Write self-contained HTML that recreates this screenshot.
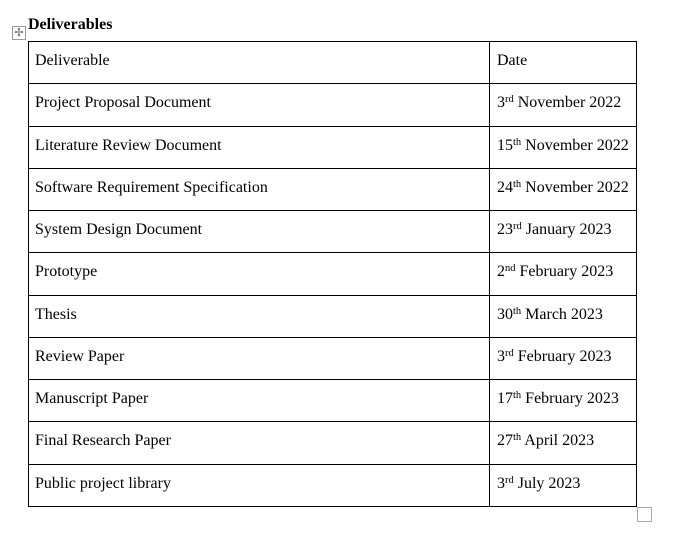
<!DOCTYPE html>
<html><head><style>
body{margin:0;width:688px;height:536px;background:#fff;font-family:"Liberation Serif",serif;font-size:16px;color:#000;position:relative;overflow:hidden}
.t{position:absolute;left:28px;top:16px;font-weight:bold;line-height:18px}
.mv{position:absolute;left:12px;top:26px;width:12px;height:12px;border:1px solid #999;font-size:11px;line-height:12px;text-align:center;color:#555}
.hl{position:absolute;left:28px;width:609px;height:1px;background:#000}
.vl{position:absolute;top:41px;height:466px;width:1px;background:#000}
.c{position:absolute;line-height:18px;margin-top:1px}
sup{font-size:10.5px;vertical-align:5px;line-height:0}
.sq{position:absolute;left:637px;top:507px;width:13px;height:13px;border:1px solid #aaa}
</style></head><body>
<div class="t">Deliverables</div>
<div class="mv">✢</div>
<div class="hl" style="top:41px"></div><div class="hl" style="top:83px"></div><div class="hl" style="top:126px"></div><div class="hl" style="top:168px"></div><div class="hl" style="top:210px"></div><div class="hl" style="top:252px"></div><div class="hl" style="top:295px"></div><div class="hl" style="top:337px"></div><div class="hl" style="top:379px"></div><div class="hl" style="top:421px"></div><div class="hl" style="top:464px"></div><div class="hl" style="top:506px"></div>
<div class="vl" style="left:28px"></div><div class="vl" style="left:489px"></div><div class="vl" style="left:636px"></div>
<div class="c" style="left:35px;top:51px">Deliverable</div><div class="c" style="left:497px;top:51px">Date</div>
<div class="c" style="left:35px;top:93px">Project Proposal Document</div><div class="c" style="left:497px;top:93px">3<sup>rd</sup> November 2022</div>
<div class="c" style="left:35px;top:136px">Literature Review Document</div><div class="c" style="left:497px;top:136px">15<sup>th</sup> November 2022</div>
<div class="c" style="left:35px;top:178px">Software Requirement Specification</div><div class="c" style="left:497px;top:178px">24<sup>th</sup> November 2022</div>
<div class="c" style="left:35px;top:220px">System Design Document</div><div class="c" style="left:497px;top:220px">23<sup>rd</sup> January 2023</div>
<div class="c" style="left:35px;top:262px">Prototype</div><div class="c" style="left:497px;top:262px">2<sup>nd</sup> February 2023</div>
<div class="c" style="left:35px;top:305px">Thesis</div><div class="c" style="left:497px;top:305px">30<sup>th</sup> March 2023</div>
<div class="c" style="left:35px;top:347px">Review Paper</div><div class="c" style="left:497px;top:347px">3<sup>rd</sup> February 2023</div>
<div class="c" style="left:35px;top:389px">Manuscript Paper</div><div class="c" style="left:497px;top:389px">17<sup>th</sup> February 2023</div>
<div class="c" style="left:35px;top:431px">Final Research Paper</div><div class="c" style="left:497px;top:431px">27<sup>th</sup> April 2023</div>
<div class="c" style="left:35px;top:474px">Public project library</div><div class="c" style="left:497px;top:474px">3<sup>rd</sup> July 2023</div>
<div class="sq"></div>
</body></html>
